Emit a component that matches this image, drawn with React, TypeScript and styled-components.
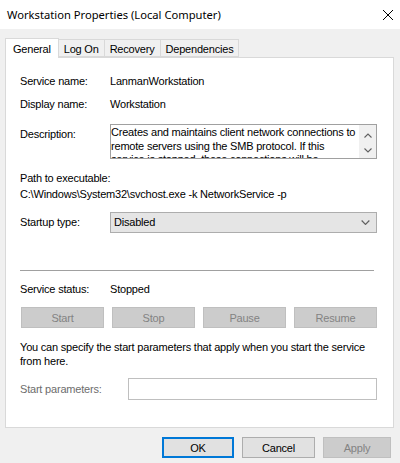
import React from 'react';
import styled, { createGlobalStyle } from 'styled-components';

const GlobalStyle = createGlobalStyle`
  html, body {
    margin: 0;
    padding: 0;
    background: #f0f0f0;
  }
  * {
    box-sizing: border-box;
  }
`;

const tabs = ['General', 'Log On', 'Recovery', 'Dependencies'];
const actions = ['Start', 'Stop', 'Pause', 'Resume'];

const Chevron: React.FC<{ up?: boolean; width?: number }> = ({ up, width = 8 }) => (
  <svg width={width} height={width / 2 + 1} viewBox="0 0 8 5" fill="none">
    <path
      d={up ? 'M0.5 4.5 L4 1 L7.5 4.5' : 'M0.5 0.5 L4 4 L7.5 0.5'}
      stroke="#606060"
      strokeWidth="1.1"
    />
  </svg>
);

const App: React.FC = () => {
  return (
    <Window>
      <GlobalStyle />
      <TitleBar>
        <Title>Workstation Properties (Local Computer)</Title>
        <CloseIcon viewBox="0 0 10 10">
          <path d="M0 0 L10 10 M10 0 L0 10" stroke="#000" strokeWidth="1" />
        </CloseIcon>
      </TitleBar>
      <Body>
        <TabStrip>
          {tabs.map((t, i) => (
            <Tab key={t} $active={i === 0}>{t}</Tab>
          ))}
        </TabStrip>
        <Panel>
          <InfoRow $top={17}>
            <Label>Service name:</Label>
            <Value>LanmanWorkstation</Value>
          </InfoRow>
          <InfoRow $top={10}>
            <Label>Display name:</Label>
            <Value>Workstation</Value>
          </InfoRow>
          <DescRow>
            <DescLabel>Description:</DescLabel>
            <DescBox>
              <DescText>
                Creates and maintains client network connections to remote servers using the
                SMB protocol. If this service is stopped, these connections will be unavailable.
              </DescText>
              <ScrollArrows>
                <Chevron up width={8} />
                <Chevron width={8} />
              </ScrollArrows>
            </DescBox>
          </DescRow>
          <PathLabel>Path to executable:</PathLabel>
          <PathText>C:\Windows\System32\svchost.exe -k NetworkService -p</PathText>
          <StartupRow>
            <Label>Startup type:</Label>
            <Combo>
              <span>Disabled</span>
              <Chevron width={9} />
            </Combo>
          </StartupRow>
          <Separator />
          <InfoRow $top={12}>
            <Label>Service status:</Label>
            <Value>Stopped</Value>
          </InfoRow>
          <ActionGrid>
            {actions.map(a => (
              <PanelButton key={a} disabled>{a}</PanelButton>
            ))}
          </ActionGrid>
          <Hint>
            You can specify the start parameters that apply when you start the service
            from here.
          </Hint>
          <ParamsRow>
            <ParamsLabel>Start parameters:</ParamsLabel>
            <ParamsInput />
          </ParamsRow>
        </Panel>
        <Footer>
          <DialogButton $w={72} $default>OK</DialogButton>
          <DialogButton $w={73}>Cancel</DialogButton>
          <DialogButton $w={68} disabled>Apply</DialogButton>
        </Footer>
      </Body>
    </Window>
  );
};

const Window = styled.div`
  width: 400px;
  height: 463px;
  display: flex;
  flex-direction: column;
  background: #f0f0f0;
  font-family: 'Liberation Sans', Arial, sans-serif;
  font-size: 11px;
  letter-spacing: -0.2px;
  color: #000;
  overflow: hidden;
`;

const TitleBar = styled.div`
  height: 29px;
  background: #fff;
  display: flex;
  align-items: center;
  justify-content: space-between;
  padding: 0 7px 0 7px;
`;

const Title = styled.div`
  font-family: 'Noto Sans', 'Liberation Sans', sans-serif;
  font-size: 11.2px;
  letter-spacing: 0;
`;

const CloseIcon = styled.svg`
  width: 10px;
  height: 10px;
`;

const Body = styled.div`
  flex: 1;
  display: flex;
  flex-direction: column;
  padding: 8px 6px 0 5px;
`;

const TabStrip = styled.div`
  display: flex;
  align-items: flex-end;
  height: 20px;
  position: relative;
  z-index: 1;
`;

const Tab = styled.div<{ $active?: boolean }>`
  height: ${p => (p.$active ? 20 : 18)}px;
  padding: 0 ${p => (p.$active ? 7 : 5)}px;
  display: flex;
  align-items: center;
  padding-top: ${p => (p.$active ? 0 : 1)}px;
  background: ${p => (p.$active ? '#fff' : '#f0f0f0')};
  border: 1px solid #d9d9d9;
  border-bottom: ${p => (p.$active ? 'none' : '1px solid #d9d9d9')};
  margin-left: -1px;
  margin-bottom: ${p => (p.$active ? -1 : 0)}px;
  &:first-child {
    margin-left: 0;
  }
`;

const Panel = styled.div`
  height: 371px;
  background: #fff;
  border: 1px solid #d9d9d9;
  display: flex;
  flex-direction: column;
  padding: 0 16px 0 14px;
  line-height: 13px;
`;

const InfoRow = styled.div<{ $top: number }>`
  display: flex;
  margin-top: ${p => p.$top}px;
`;

const Label = styled.div`
  width: 90px;
  flex-shrink: 0;
`;

const Value = styled.div``;

const DescRow = styled.div`
  display: flex;
  margin-top: 13px;
`;

const DescLabel = styled(Label)`
  padding-top: 4px;
`;

const DescBox = styled.div`
  flex: 1;
  height: 35px;
  border: 1px solid #a0a0a0;
  display: flex;
  overflow: hidden;
`;

const DescText = styled.div`
  flex: 1;
  padding: 1px 0 0 0;
  line-height: 13.5px;
`;

const ScrollArrows = styled.div`
  width: 17px;
  background: #f0f0f0;
  display: flex;
  flex-direction: column;
  align-items: center;
  justify-content: space-between;
  padding: 8px 0 5px;
`;

const PathLabel = styled.div`
  margin-top: 13px;
`;

const PathText = styled.div`
  margin-top: 3px;
`;

const StartupRow = styled.div`
  display: flex;
  align-items: center;
  margin-top: 11px;
`;

const Combo = styled.div`
  flex: 1;
  height: 21px;
  background: #e5e5e5;
  border: 1px solid #adadad;
  display: flex;
  align-items: center;
  justify-content: space-between;
  padding: 0 6px 0 3px;
`;

const Separator = styled.div`
  height: 1px;
  background: #a0a0a0;
  margin: 37px 3px 0 0;
`;

const ActionGrid = styled.div`
  display: grid;
  grid-template-columns: repeat(4, 1fr);
  gap: 8px;
  margin: 11px 0 0 1px;
`;

const PanelButton = styled.button`
  height: 21px;
  font-family: inherit;
  font-size: 11px;
  letter-spacing: inherit;
  background: #cccccc;
  border: 1px solid #bfbfbf;
  color: #838383;
  padding: 0;
`;

const Hint = styled.div`
  margin-top: 12px;
  line-height: 14px;
`;

const ParamsRow = styled.div`
  display: flex;
  align-items: center;
  margin-top: 10px;
`;

const ParamsLabel = styled.div`
  width: 108px;
  color: #6d6d6d;
`;

const ParamsInput = styled.div`
  flex: 1;
  height: 22px;
  border: 1px solid #bfbfbf;
  background: #fff;
`;

const Footer = styled.div`
  display: flex;
  justify-content: flex-end;
  gap: 8px;
  margin-top: 9px;
  padding-right: 3px;
`;

const DialogButton = styled.button<{ $w: number; $default?: boolean }>`
  width: ${p => p.$w}px;
  height: 21px;
  font-family: inherit;
  font-size: 11px;
  letter-spacing: inherit;
  padding: 0;
  background: ${p => (p.disabled ? '#cccccc' : '#e1e1e1')};
  color: ${p => (p.disabled ? '#838383' : '#000')};
  border: ${p =>
    p.$default ? '2px solid #0078d7' : p.disabled ? '1px solid #bfbfbf' : '1px solid #adadad'};
`;

export default App;
